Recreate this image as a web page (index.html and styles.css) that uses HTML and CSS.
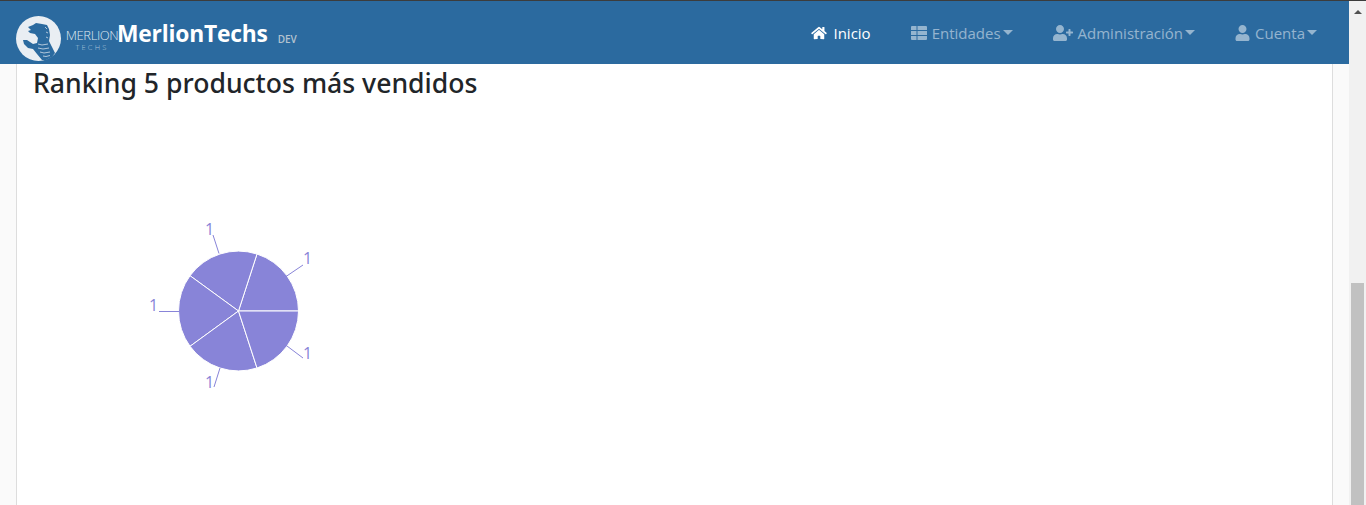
FILE: index.html
```html
<!DOCTYPE html>
<html lang="es">
<head>
    <meta charset="UTF-8">
    <title>MerlionTechs</title>
    <link rel="stylesheet" href="styles.css">
</head>
<body>
    <div class="window">
        <div class="main">
            <nav class="navbar">
                <a class="brand" href="#">
                    <svg class="logo" viewBox="0 0 45 45">
                        <circle cx="22.5" cy="22.5" r="22.5" fill="#e9eef3"/>
                        <path fill="#2b6a9f" d="M12 11L17 9L20 7L26 8L31 9L33 13L34 19L33 25L36 31L39 37L36 41L30 44L26 44L21 38L17 33L12 32L8 28L7 24L11 24L14 26L17 28L21 27L22 22L19 18L14 17L12 15L15 14Z"/>
                        <path fill="none" stroke="#e9eef3" stroke-width=".7" d="M22 28l4 1 6-1M22 32l5 1 6-1M24 36l4 1 6-1M27 40l3 .5 4-1M29 11l2 2M30 16l2 1M30 21l2 1"/>
                    </svg>
                    <span class="logo-text">
                        <span class="logo-name">MERLION</span>
                        <span class="logo-sub">TECHS</span>
                    </span>
                    <span class="brand-name">MerlionTechs</span>
                    <small class="brand-env">DEV</small>
                </a>
                <ul class="nav-links">
                    <li><a class="nav-link active" href="#">
                        <svg class="icon icon-home" viewBox="0 0 576 512"><path d="M280.37 148.26L96 300.11V464a16 16 0 0 0 16 16l112.06-.29a16 16 0 0 0 15.92-16V368a16 16 0 0 1 16-16h64a16 16 0 0 1 16 16v95.64a16 16 0 0 0 16 16.05L464 480a16 16 0 0 0 16-16V300L295.67 148.26a12.19 12.19 0 0 0-15.3 0zM571.6 251.47L488 182.56V44.05a12 12 0 0 0-12-12h-56a12 12 0 0 0-12 12v72.61L318.47 43a48 48 0 0 0-61 0L4.34 251.47a12 12 0 0 0-1.6 16.9l25.5 31A12 12 0 0 0 45.15 301l235.22-193.74a12.19 12.19 0 0 1 15.3 0L530.9 301a12 12 0 0 0 16.9-1.6l25.5-31a12 12 0 0 0-1.7-16.93z"/></svg>
                        Inicio</a></li>
                    <li><a class="nav-link" href="#">
                        <svg class="icon icon-table" viewBox="0 0 16 14"><path d="M1 0h4.500v4H0V1a1 1 0 0 1 1-1zM6.500 0H15a1 1 0 0 1 1 1v3H6.500zM0 5h5.500v4H0zM6.500 5H16v4H6.500zM0 10h5.500v4H1a1 1 0 0 1-1-1zM6.500 10H16v3a1 1 0 0 1-1 1H6.500z"/></svg>
                        Entidades<span class="caret"></span></a></li>
                    <li><a class="nav-link" href="#">
                        <svg class="icon icon-user-plus" viewBox="0 0 640 512"><path d="M624 208h-64v-64c0-8.800-7.200-16-16-16h-32c-8.800 0-16 7.200-16 16v64h-64c-8.800 0-16 7.200-16 16v32c0 8.800 7.200 16 16 16h64v64c0 8.800 7.200 16 16 16h32c8.800 0 16-7.200 16-16v-64h64c8.800 0 16-7.200 16-16v-32c0-8.800-7.200-16-16-16zm-400 48c70.700 0 128-57.300 128-128S294.700 0 224 0 96 57.300 96 128s57.300 128 128 128zm89.600 32h-16.700c-22.200 10.200-46.900 16-72.900 16s-50.600-5.800-72.900-16h-16.700C60.200 288 0 348.200 0 422.400V464c0 26.500 21.500 48 48 48h352c26.500 0 48-21.500 48-48v-41.600c0-74.200-60.200-134.400-134.400-134.400z"/></svg>
                        Administración<span class="caret"></span></a></li>
                    <li><a class="nav-link" href="#">
                        <svg class="icon icon-user" viewBox="0 0 448 512"><path d="M224 256c70.700 0 128-57.300 128-128S294.700 0 224 0 96 57.300 96 128s57.300 128 128 128zm89.600 32h-16.700c-22.200 10.200-46.900 16-72.900 16s-50.600-5.800-72.900-16h-16.700C60.200 288 0 348.200 0 422.400V464c0 26.500 21.500 48 48 48h352c26.500 0 48-21.500 48-48v-41.600c0-74.200-60.200-134.400-134.400-134.400z"/></svg>
                        Cuenta<span class="caret"></span></a></li>
                </ul>
            </nav>
            <div class="content">
                <div class="card">
                    <h2 class="card-title">Ranking 5 productos más vendidos</h2>
                    <svg class="pie-chart" width="400" height="300" viewBox="0 0 400 300">
                        <g class="pie-slices">
                            <path d="M204.500 200L264.500 200A60 60 0 0 0 223 143z"/>
                            <path d="M204.500 200L223 143A60 60 0 0 0 156 164.700z"/>
                            <path d="M204.500 200L156 164.700A60 60 0 0 0 156 235.300z"/>
                            <path d="M204.500 200L156 235.300A60 60 0 0 0 223 257z"/>
                            <path d="M204.500 200L223 257A60 60 0 0 0 264.500 200z"/>
                        </g>
                        <g class="pie-lines">
                            <path d="M252 165.500L269 154"/>
                            <path d="M185 142.500L179 124"/>
                            <path d="M145 200.500H125"/>
                            <path d="M186 257L180 276"/>
                            <path d="M253 235L269 247"/>
                        </g>
                        <g class="pie-labels">
                            <text x="269" y="153">1</text>
                            <text x="171" y="124">1</text>
                            <text x="115" y="200">1</text>
                            <text x="171" y="277">1</text>
                            <text x="269" y="248">1</text>
                        </g>
                    </svg>
                </div>
            </div>
        </div>
        <div class="scrollbar">
            <span class="scroll-arrow"></span>
            <div class="scroll-thumb"></div>
        </div>
    </div>
</body>
</html>
```

FILE: styles.css
```css
:root {
    --nav-blue: #2b6a9f;
    --pie: #8884d8;
}

html, body {
    height: 100%;
}

body {
    margin: 0;
    overflow: hidden;
    background: #fff;
    color: #212529;
    font-family: "Open Sans", "Noto Sans", sans-serif;
}

.window {
    display: flex;
    height: 505px;
    box-sizing: border-box;
    border-top: 1px solid #3c3c3c;
}

.main {
    flex: 1;
    display: flex;
    flex-direction: column;
    min-width: 0;
}

.navbar {
    height: 63px;
    flex-shrink: 0;
    display: flex;
    align-items: center;
    justify-content: space-between;
    background: var(--nav-blue);
    padding: 0 16px;
}

.brand {
    display: flex;
    align-items: center;
    color: #fff;
    text-decoration: none;
}

.logo {
    width: 45px;
    height: 45px;
    margin-top: 12px;
}

.logo-text {
    display: flex;
    flex-direction: column;
    align-items: center;
    width: 52px;
    margin: 14px 0 0 5px;
    font-weight: 300;
    color: #dfe8f0;
}

.logo-name {
    font-size: 13px;
    line-height: 12px;
    letter-spacing: -0.4px;
}

.logo-sub {
    font-size: 7.500px;
    line-height: 8px;
    letter-spacing: 2.200px;
    margin-top: 2px;
    color: #a9c3da;
}

.brand-name {
    font-size: 22.800px;
    font-weight: 700;
    letter-spacing: -0.2px;
    margin: 2px 0 0 -1px;
}

.brand-env {
    font-size: 10px;
    font-weight: 600;
    color: #b4c3cf;
    margin: 12px 0 0 10px;
}

.nav-links {
    display: flex;
    list-style: none;
    margin: 0;
    padding: 0;
    gap: 40px;
    margin-right: 16px;
}

.nav-link {
    display: flex;
    align-items: center;
    font-size: 15px;
    line-height: 20px;
    color: rgba(255, 255, 255, .5);
    text-decoration: none;
}

.nav-link.active {
    color: #fff;
}

.icon {
    height: 14px;
    fill: currentColor;
    margin-right: 5px;
}

.icon-home { width: 18px; }
.icon-table { width: 16px; }
.icon-user-plus { width: 20px; height: 16px; }
.icon-user { width: 15px; height: 16px; }

.caret {
    width: 0;
    height: 0;
    margin-left: 2px;
    border-top: 5px solid currentColor;
    border-left: 5px solid transparent;
    border-right: 5px solid transparent;
}

.content {
    flex: 1;
    display: flex;
    background: #fafafa;
    padding: 0 16px;
    min-height: 0;
}

.card {
    flex: 1;
    background: #fff;
    border-left: 1px solid #ddd;
    border-right: 1px solid #ddd;
    padding-left: 16px;
}

.card-title {
    margin: 0;
    padding-top: 1px;
    font-family: "Noto Sans", sans-serif;
    font-size: 26.600px;
    line-height: 36px;
    font-weight: 500;
    height: 46px;
}

.pie-chart {
    display: block;
    margin-left: 1px;
}

.pie-slices path {
    fill: var(--pie);
    stroke: #fff;
    stroke-width: 1;
}

.pie-lines path {
    fill: none;
    stroke: var(--pie);
    stroke-width: 1;
}

.pie-labels text {
    fill: var(--pie);
    font-size: 16px;
    font-family: "Open Sans", sans-serif;
}

.scrollbar {
    width: 17px;
    flex-shrink: 0;
    display: flex;
    flex-direction: column;
    align-items: center;
    background: #f1f1f1;
}

.scroll-arrow {
    width: 0;
    height: 0;
    margin-top: 9px;
    border-bottom: 4px solid #505050;
    border-left: 4px solid transparent;
    border-right: 4px solid transparent;
}

.scroll-thumb {
    width: 13px;
    flex: 1;
    margin-top: 269px;
    background: #c1c1c1;
}
```
